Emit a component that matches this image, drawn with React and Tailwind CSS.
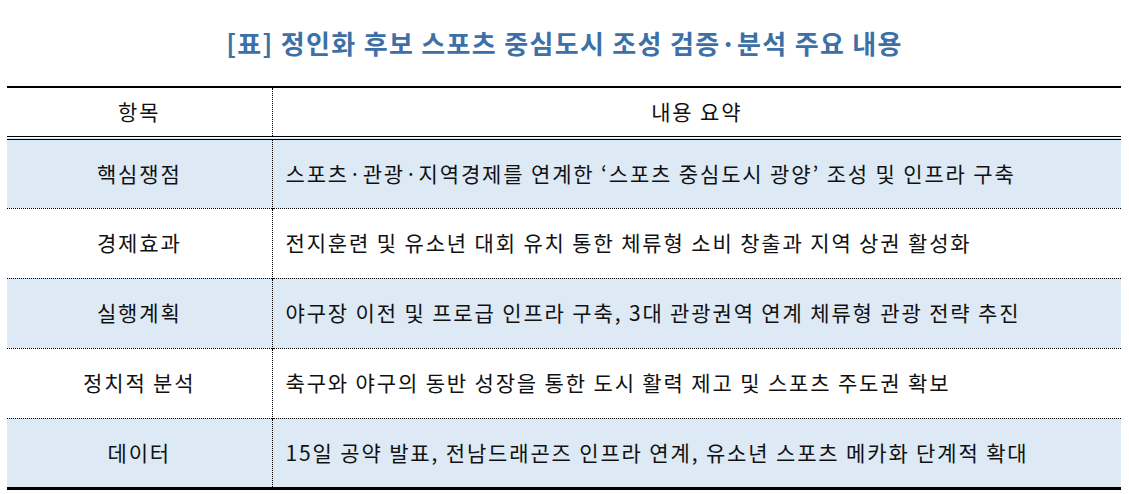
import React from 'react';

const ROWS = [
  { label: '핵심쟁점', text: '스포츠·관광·지역경제를 연계한 ‘스포츠 중심도시 광양’ 조성 및 인프라 구축', shade: true },
  { label: '경제효과', text: '전지훈련 및 유소년 대회 유치 통한 체류형 소비 창출과 지역 상권 활성화', shade: false },
  { label: '실행계획', text: '야구장 이전 및 프로급 인프라 구축, 3대 관광권역 연계 체류형 관광 전략 추진', shade: true },
  { label: '정치적 분석', text: '축구와 야구의 동반 성장을 통한 도시 활력 제고 및 스포츠 주도권 확보', shade: false },
  { label: '데이터', text: '15일 공약 발표, 전남드래곤즈 인프라 연계, 유소년 스포츠 메카화 단계적 확대', shade: true },
];

export default function App() {
  return (
    <div className="w-[1129px] h-[494px] bg-white font-['Noto_Sans_CJK_KR',sans-serif] text-[#111]">
      {/* Title */}
      <h1 className="pt-[23px] h-[86px] text-center text-[26px] font-bold tracking-[1.3px] text-[#3d70a6]">
        [표] 정인화 후보 스포츠 중심도시 조성 검증·분석 주요 내용
      </h1>

      <table className="ml-[7px] w-[1114px] border-collapse border-t-2 border-b-[3px] border-black text-[21px] tracking-[1.85px]">
        <thead>
          <tr className="h-[51px] border-b-4 border-double border-black">
            <th className="w-[265px] font-normal border-r border-dotted border-black">항목</th>
            <th className="font-normal">내용 요약</th>
          </tr>
        </thead>
        <tbody>
          {ROWS.map((row, i) => (
            <tr
              key={row.label}
              className={`h-[70px] ${row.shade ? 'bg-[#dde9f5]' : 'bg-white'} ${i < ROWS.length - 1 ? 'border-b border-dotted border-black' : ''}`}
            >
              <td className="text-center border-r border-dotted border-black">{row.label}</td>
              <td className="pl-[13px]">{row.text}</td>
            </tr>
          ))}
        </tbody>
      </table>
    </div>
  );
}
